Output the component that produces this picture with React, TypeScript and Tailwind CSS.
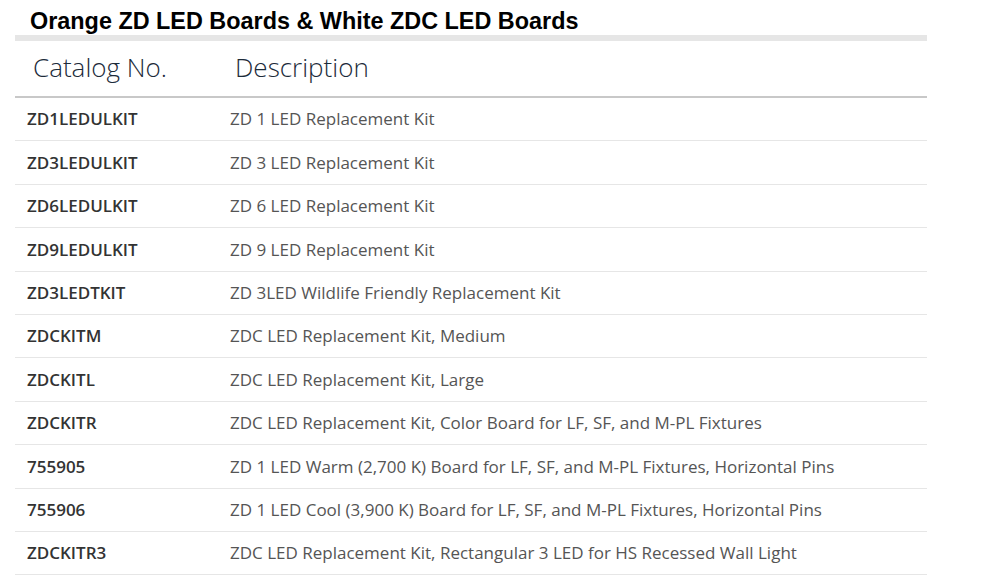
const ROWS: [string, string][] = [
  ['ZD1LEDULKIT', 'ZD 1 LED Replacement Kit'],
  ['ZD3LEDULKIT', 'ZD 3 LED Replacement Kit'],
  ['ZD6LEDULKIT', 'ZD 6 LED Replacement Kit'],
  ['ZD9LEDULKIT', 'ZD 9 LED Replacement Kit'],
  ['ZD3LEDTKIT', 'ZD 3LED Wildlife Friendly Replacement Kit'],
  ['ZDCKITM', 'ZDC LED Replacement Kit, Medium'],
  ['ZDCKITL', 'ZDC LED Replacement Kit, Large'],
  ['ZDCKITR', 'ZDC LED Replacement Kit, Color Board for LF, SF, and M-PL Fixtures'],
  ['755905', 'ZD 1 LED Warm (2,700 K) Board for LF, SF, and M-PL Fixtures, Horizontal Pins'],
  ['755906', 'ZD 1 LED Cool (3,900 K) Board for LF, SF, and M-PL Fixtures, Horizontal Pins'],
  ['ZDCKITR3', 'ZDC LED Replacement Kit, Rectangular 3 LED for HS Recessed Wall Light'],
];

export default function App() {
  return (
    <div className="w-[1000px] h-[576px] overflow-hidden bg-white pl-[15px]">
      <div className="w-[912px]">
        <h1 className="pl-[15px] pt-[8px] h-[35px] text-[23.4px] leading-[26px] font-bold text-black font-['Liberation_Sans',Arial,sans-serif]">
          Orange ZD LED Boards &amp; White ZDC LED Boards
        </h1>
        <div className="h-[6px] bg-[#e6e6e6]" />

        <div className="font-['Open_Sans','Noto_Sans',sans-serif]">
          {/* header */}
          <div className="flex items-center h-[57px] pb-[2px] border-b-2 border-[#c8c8c8] text-[26px] font-light text-[#1c2b3a]">
            <div className="w-[220px] pl-[18px]">Catalog No.</div>
            <div className="flex-1">Description</div>
          </div>

          {ROWS.map(([code, desc]) => (
            <div key={code} className="flex items-center h-[43.4px] border-b border-[#e6e6e6]">
              <div className="w-[215px] pl-[12px] text-[17px] font-semibold text-[#333]">{code}</div>
              <div className="flex-1 text-[17px] text-[#555]">{desc}</div>
            </div>
          ))}
        </div>
      </div>
    </div>
  );
}
